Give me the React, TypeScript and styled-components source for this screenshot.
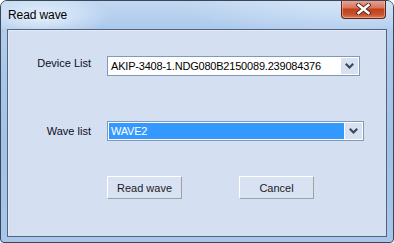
import styled, { createGlobalStyle } from 'styled-components'
import { FC } from 'react'

const GlobalStyle = createGlobalStyle`
    html, body {
        margin: 0;
        padding: 0;
        background: #ffffff;
    }
    #root {
        width: 394px;
        height: 243px;
    }
`;

const Window = styled.div`
    width: 394px;
    height: 243px;
    box-sizing: border-box;
    display: flex;
    flex-direction: column;
    border: 1px solid #39475a;
    border-radius: 7px 7px 4px 4px;
    background: linear-gradient(180deg, #b9d1ee 0%, #a9c7ea 30%, #a3c2e8 60%, #a8c6ea 100%);
    overflow: hidden;
    font-family: 'Liberation Sans', Arial, sans-serif;
`;
const TitleBar = styled.div`
    height: 28px;
    flex-shrink: 0;
    display: flex;
    align-items: center;
    padding-left: 7px;
    background:
        radial-gradient(ellipse 70px 22px at 40px 15px, rgba(235, 244, 253, 0.9), rgba(235, 244, 253, 0) 100%),
        radial-gradient(ellipse 160px 40px at 340px 0px, rgba(220, 234, 250, 0.7), rgba(220, 234, 250, 0) 100%),
        linear-gradient(180deg, #c2d8f1 0%, #abc9ec 100%);
`;
const Title = styled.span`
    font-size: 12px;
    color: #000000;
    letter-spacing: -0.1px;
`;
const CloseButton = styled.div`
    margin-left: auto;
    margin-right: 7px;
    align-self: flex-start;
    width: 45px;
    height: 19px;
    margin-top: -1px;
    box-sizing: border-box;
    border: 1px solid #5e2518;
    border-top: none;
    border-radius: 0 0 4px 4px;
    background: linear-gradient(180deg, #e9a998 0%, #d9755c 42%, #c0401f 52%, #c9502c 80%, #dc7a52 100%);
    box-shadow: inset 0 0 0 1px rgba(255, 210, 195, 0.45);
    display: flex;
    align-items: center;
    justify-content: center;
`;
const Client = styled.div`
    flex: 1;
    margin: 0 6px 5px 6px;
    border: 1px solid #56647a;
    background: #d5dff2;
    box-shadow: inset 1px 1px 0 #e2eaf7;
    display: flex;
    flex-direction: column;
    padding-top: 26px;
`;
const Row = styled.div<{ $gap: number }>`
    display: flex;
    align-items: center;
    margin-bottom: ${p => p.$gap}px;
`;
const Label = styled.div<{ $raise?: number }>`
    width: 83px;
    margin-right: 16px;
    text-align: right;
    font-size: 11px;
    color: #0d0d1a;
    position: relative;
    top: ${p => -(p.$raise || 0)}px;
`;
const Combo = styled.div<{ $width: number }>`
    width: ${p => p.$width}px;
    height: 20px;
    box-sizing: border-box;
    border: 1px solid #7f99b9;
    background: #ffffff;
    padding: 1px;
    display: flex;
`;
const ComboText = styled.div<{ $selected?: boolean }>`
    flex: 1;
    display: flex;
    align-items: center;
    padding-left: 2px;
    font-size: 11px;
    letter-spacing: -0.2px;
    white-space: nowrap;
    overflow: hidden;
    color: ${p => (p.$selected ? '#ffffff' : '#000000')};
    background: ${p => (p.$selected ? '#3399ff' : '#ffffff')};
`;
const ArrowBox = styled.div`
    width: 17px;
    margin-left: 1px;
    background: #d9e1f0;
    display: flex;
    align-items: center;
    justify-content: center;
`;
const ButtonRow = styled.div`
    display: flex;
    gap: 57px;
    padding-left: 99px;
`;
const Button = styled.div`
    width: 75px;
    height: 23px;
    box-sizing: border-box;
    border-top: 1px solid #ffffff;
    border-left: 1px solid #ffffff;
    border-right: 1px solid #a0a0a0;
    border-bottom: 1px solid #a0a0a0;
    background: #d9e2f3;
    display: flex;
    align-items: center;
    justify-content: center;
    font-size: 11px;
    color: #1b1b24;
`;

const Chevron: FC = () => (
    <svg width="9" height="6" viewBox="0 0 9 6">
        <path d="M0.8 0.8 L4.5 4.5 L8.2 0.8" fill="none" stroke="#3b4a62" strokeWidth="2.2" />
    </svg>
);

const CloseGlyph: FC = () => (
    <svg width="15" height="12" viewBox="0 0 15 12">
        <path d="M2.5 2 L12.5 10 M12.5 2 L2.5 10" stroke="#5a2a22" strokeWidth="4.4" strokeLinecap="square" />
        <path d="M2.5 2 L12.5 10 M12.5 2 L2.5 10" stroke="#ffffff" strokeWidth="2.4" strokeLinecap="square" />
    </svg>
);

interface ComboProps {
    value: string,
    width: number,
    selected?: boolean
}
const ComboBox: FC<ComboProps> = ({ value, width, selected }) => (
    <Combo $width={width}>
        <ComboText $selected={selected}>{value}</ComboText>
        <ArrowBox>
            <Chevron />
        </ArrowBox>
    </Combo>
);

const App: FC = () => {
    return (
        <>
            <GlobalStyle />
            <Window>
                <TitleBar>
                    <Title>Read wave</Title>
                    <CloseButton>
                        <CloseGlyph />
                    </CloseButton>
                </TitleBar>
                <Client>
                    <Row $gap={45}>
                        <Label $raise={3}>Device List</Label>
                        <ComboBox value="AKIP-3408-1.NDG080B2150089.239084376" width={253} />
                    </Row>
                    <Row $gap={35}>
                        <Label>Wave list</Label>
                        <ComboBox value="WAVE2" width={257} selected />
                    </Row>
                    <ButtonRow>
                        <Button>Read wave</Button>
                        <Button>Cancel</Button>
                    </ButtonRow>
                </Client>
            </Window>
        </>
    )
}
export default App
